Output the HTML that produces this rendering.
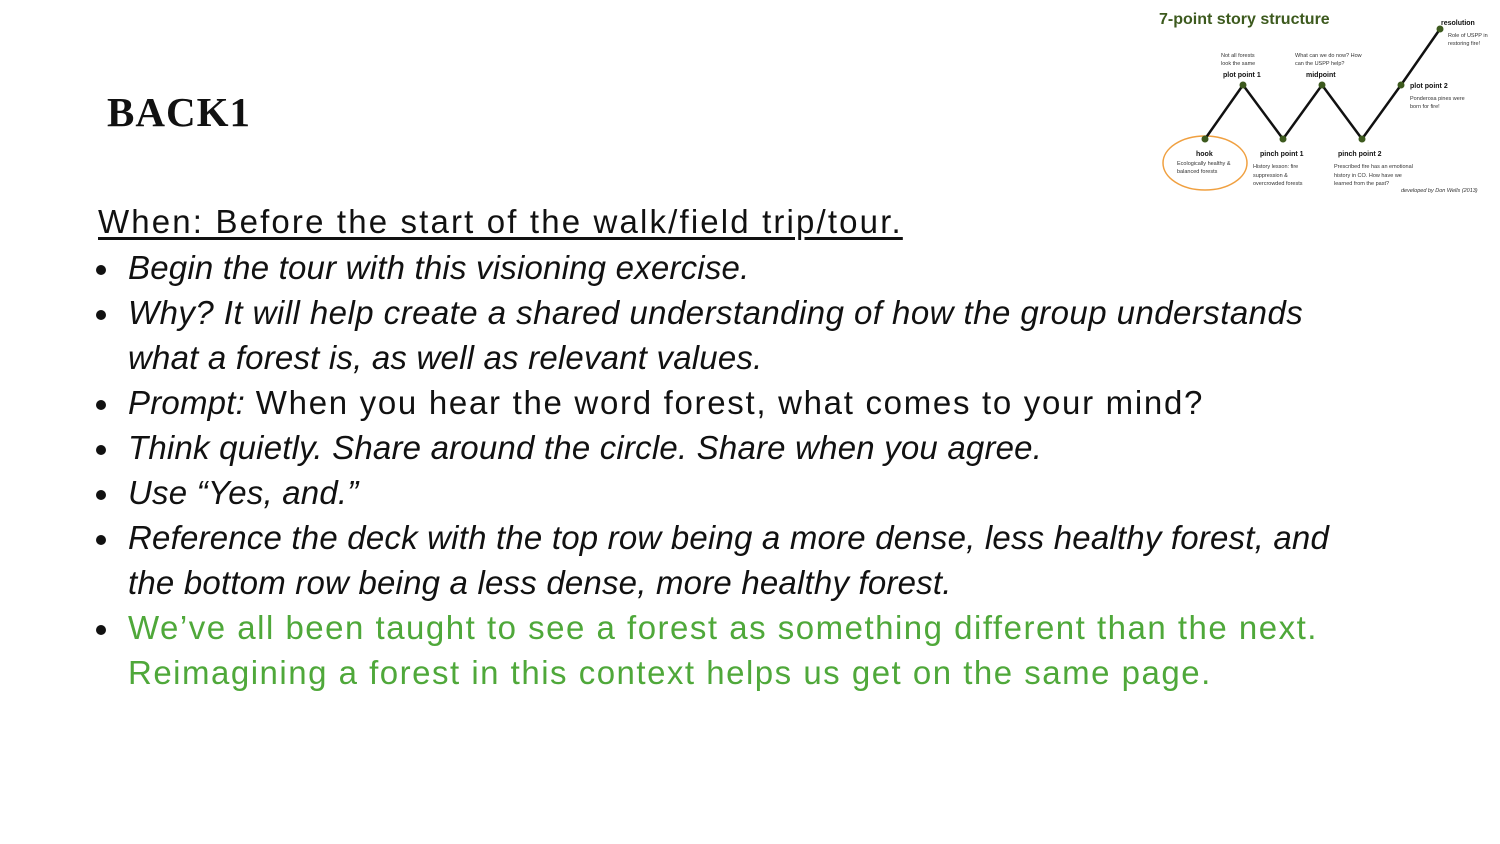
<!DOCTYPE html>
<html><head><style>
body{margin:0;width:1500px;height:844px;background:#fff;position:relative;overflow:hidden;font-family:"Liberation Sans",sans-serif}
.t{position:absolute;left:107px;top:88px;font-family:"Liberation Serif",serif;font-weight:bold;font-size:41px;letter-spacing:1px;color:#111}
.l{position:absolute;left:128px;font-size:33px;line-height:40px;white-space:nowrap;color:#111;letter-spacing:1.5px}
.i{font-style:italic;letter-spacing:0.2px}
.l i{letter-spacing:0.2px}
.g{color:#4fa83a}
.b{position:absolute;left:96px;width:10px;height:10px;border-radius:50%;background:#111}
</style></head><body>
<div class="t">BACK1</div>
<div class="l" style="left:98px;top:202px;letter-spacing:2.15px;text-decoration:underline;text-underline-offset:4px">When: Before the start of the walk/field trip/tour.</div>
<div class="b" style="top:265px"></div><div class="l i" style="top:248px">Begin the tour with this visioning exercise.</div>
<div class="b" style="top:310px"></div><div class="l i" style="top:293px;letter-spacing:0.45px">Why? It will help create a shared understanding of how the group understands</div>
<div class="l i" style="top:338px">what a forest is, as well as relevant values.</div>
<div class="b" style="top:400px"></div><div class="l" style="top:383px;letter-spacing:1.7px"><i>Prompt:</i> When you hear the word forest, what comes to your mind?</div>
<div class="b" style="top:445px"></div><div class="l i" style="top:428px">Think quietly. Share around the circle. Share when you agree.</div>
<div class="b" style="top:490px"></div><div class="l i" style="top:473px">Use “Yes, and.”</div>
<div class="b" style="top:535px"></div><div class="l i" style="top:518px">Reference the deck with the top row being a more dense, less healthy forest, and</div>
<div class="l i" style="top:563px">the bottom row being a less dense, more healthy forest.</div>
<div class="b" style="top:625px"></div><div class="l g" style="top:608px">We’ve all been taught to see a forest as something different than the next.</div>
<div class="l g" style="top:653px">Reimagining a forest in this context helps us get on the same page.</div>
<svg style="position:absolute;left:0;top:0" width="1500" height="844" font-family="Liberation Sans, sans-serif">
<text x="1159" y="24" font-size="16" font-weight="bold" fill="#3d5a1e">7-point story structure</text>
<ellipse cx="1205" cy="163" rx="42" ry="27" fill="none" stroke="#f0a040" stroke-width="1.5"/>
<polyline points="1205,139 1243,85 1283,139 1322,85 1362,139 1401,85 1440,29" fill="none" stroke="#111" stroke-width="2.5"/>
<g fill="#3d5a1e"><circle cx="1205" cy="139" r="3.5"/><circle cx="1243" cy="85" r="3.5"/><circle cx="1283" cy="139" r="3.5"/><circle cx="1322" cy="85" r="3.5"/><circle cx="1362" cy="139" r="3.5"/><circle cx="1401" cy="85" r="3.5"/><circle cx="1440" cy="29" r="3.5"/></g>
<g font-size="7" font-weight="bold" fill="#111">
<text x="1441" y="25">resolution</text><text x="1223" y="77">plot point 1</text><text x="1306" y="77">midpoint</text><text x="1410" y="88">plot point 2</text><text x="1196" y="156">hook</text><text x="1260" y="156">pinch point 1</text><text x="1338" y="156">pinch point 2</text></g>
<g font-size="5.5" fill="#333">
<text x="1448" y="37">Role of USPP in</text><text x="1448" y="45">restoring fire!</text>
<text x="1221" y="57">Not all forests</text><text x="1221" y="65">look the same</text>
<text x="1295" y="57">What can we do now? How</text><text x="1295" y="65">can the USPP help?</text>
<text x="1410" y="100">Ponderosa pines were</text><text x="1410" y="108">born for fire!</text>
<text x="1177" y="165">Ecologically healthy &amp;</text><text x="1177" y="173">balanced forests</text>
<text x="1253" y="168">History lesson: fire</text><text x="1253" y="177">suppression &amp;</text><text x="1253" y="185">overcrowded forests</text>
<text x="1334" y="168">Prescribed fire has an emotional</text><text x="1334" y="177">history in CO. How have we</text><text x="1334" y="185">learned from the past?</text>
<text x="1401" y="192" font-style="italic">developed by Don Wells (2013)</text></g>
</svg>
</body></html>
